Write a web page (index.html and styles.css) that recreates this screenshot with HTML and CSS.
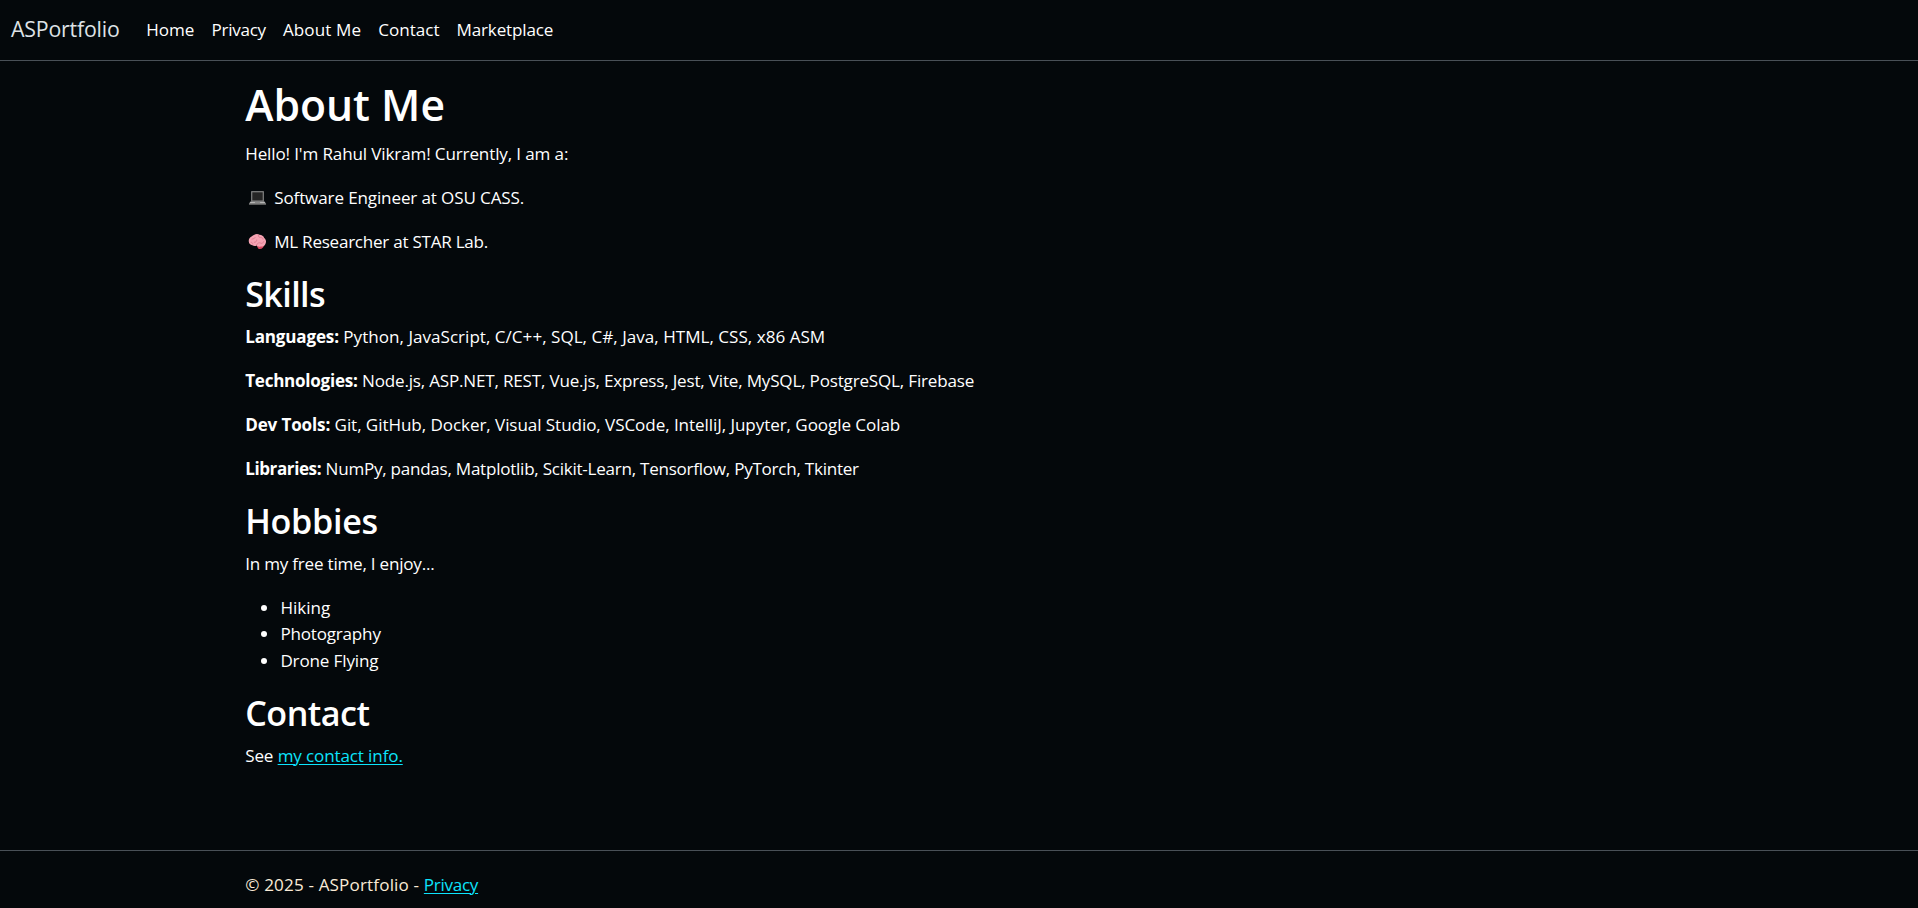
FILE: index.html
```html
<!DOCTYPE html>
<html lang="en">
<head>
<meta charset="utf-8">
<title>About Me - ASPortfolio</title>
<link rel="stylesheet" href="styles.css">
</head>
<body>
<header class="navbar">
  <a class="brand" href="#">ASPortfolio</a>
  <nav class="nav-links">
    <a class="nav-home" href="#">Home</a>
    <a class="nav-privacy" href="#">Privacy</a>
    <a class="nav-about" href="#">About Me</a>
    <a class="nav-contact" href="#">Contact</a>
    <a class="nav-market" href="#">Marketplace</a>
  </nav>
</header>
<main class="container">
  <h1>About Me</h1>
  <p class="intro">Hello! I'm Rahul Vikram! Currently, I am a:</p>
  <p class="role role-dev"><svg class="emoji" viewBox="0 0 24 24" aria-hidden="true"><path fill="#8d8d8d" d="M4 4h16v13H4z"/><path fill="#252525" d="M5.400 5.400h13.200v10.400H5.400z"/><path fill="#b5b5b5" d="M3.200 17h17.600l2 3H1.200z"/><path fill="#777" d="M9 18h6l.6 1.200H8.400zM1.200 19.600h21.600v1.400H1.200z"/></svg><span>Software Engineer at OSU CASS.</span></p>
  <p class="role role-ml"><svg class="emoji" viewBox="0 0 24 24" aria-hidden="true"><path fill="#d94b63" d="M11 16c2-1 8-1 9 1 0 2-2 4.500-5 4.500s-3-3-4-5.500z"/><path fill="#f5a3b3" d="M1 12c-.5-3 1.500-5.500 4-6.500C8 2.500 12 2 14.500 3.500c3 .2 5 1.500 6 4 2.500 2 2.800 5 1.500 7.500-1 2.500-3.500 3.500-6 3.200-2 .6-4 .3-5-1.200-2 1-4 .8-5.500-.3C3 16.500 1 14.500 1 12z"/><path fill="none" stroke="#dc7d91" stroke-width="1.200" stroke-linecap="round" d="M5 9c2-1 3 0 4-2M8 13c2 0 3-1 3-3m2-6c0 2 1 3 3 3s3 1 3 2m-8 7c1-2 3-3 5-2s3 0 4-2M4 13c1 0 2 1 2 2"/></svg><span>ML Researcher at STAR Lab.</span></p>

  <h2 class="h-skills">Skills</h2>
  <p class="langs"><strong>Languages:</strong> <span>Python, JavaScript, C/C++, SQL, C#, Java, HTML, CSS, x86 ASM</span></p>
  <p class="techs"><strong>Technologies:</strong> <span>Node.js, ASP.NET, REST, Vue.js, Express, Jest, Vite, MySQL, PostgreSQL, Firebase</span></p>
  <p class="tools"><strong>Dev Tools:</strong> <span>Git, GitHub, Docker, Visual Studio, VSCode, IntelliJ, Jupyter, Google Colab</span></p>
  <p class="libs"><strong>Libraries:</strong> <span>NumPy, pandas, Matplotlib, Scikit-Learn, Tensorflow, PyTorch, Tkinter</span></p>

  <h2 class="h-hobbies">Hobbies</h2>
  <p class="free-time">In my free time, I enjoy...</p>
  <ul>
    <li>Hiking</li>
    <li class="photo">Photography</li>
    <li class="drone">Drone Flying</li>
  </ul>

  <h2 class="h-contact">Contact</h2>
  <p class="see">See <a href="#">my contact info.</a></p>
</main>
<footer class="footer">
  <div class="footer-inner"><span>© 2025 - ASPortfolio - </span><a href="#">Privacy</a></div>
</footer>
</body>
</html>
```
FILE: styles.css
```css
* { box-sizing: border-box; }

body {
  margin: 0;
  height: 908px;
  display: flex;
  flex-direction: column;
  overflow: hidden;
  background: #04080b;
  color: #fff;
  font: 17.07px/26.4px "Segoe UI", "Open Sans", "Noto Sans", sans-serif;
}

a { color: #0ce4fc; text-decoration: underline; text-underline-offset: 2px; text-decoration-thickness: 1px; }

/* Top bar */
.navbar {
  height: 61px;
  padding: 0 11px;
  display: flex;
  align-items: center;
  border-bottom: 1px solid #495057;
}
.navbar a { color: #fff; text-decoration: none; }
.navbar .brand { color: #dee2e6; font-size: 21.34px; letter-spacing: -.193px; margin-right: 26.5px; padding-bottom: 1px; }
.nav-links { display: flex; gap: 17.1px; }
.nav-privacy { letter-spacing: -.28px; }
.nav-about { letter-spacing: .1px; }
.nav-market { letter-spacing: -.17px; }

/* Content */
.container { width: 1452px; margin: 18.1px auto 0; padding: 0 14.2px 0 12.2px; flex: 1; }

h1, h2 { margin: 0 0 8.8px; font-weight: 600; }
h1 { font-size: 42.68px; line-height: 52.8px; }
h2 { font-size: 34.14px; line-height: 42.24px; }
.h-skills { letter-spacing: -.6px; }
.h-hobbies { letter-spacing: -.3px; }
.h-contact { letter-spacing: -.5px; }

p { margin: 0 0 17.6px; }
strong { font-weight: 700; }
.intro { letter-spacing: -.136px; }
.role { display: flex; align-items: center; gap: 5px; }
.role-dev { letter-spacing: -.132px; }
.role-ml { letter-spacing: -.253px; }
.emoji { width: 19px; height: 19px; margin: 0 2px 0 3px; }
.langs strong { letter-spacing: -.169px; }
.langs span { letter-spacing: .015px; }
.techs strong { letter-spacing: -.26px; }
.techs span { letter-spacing: -.19px; }
.tools strong { letter-spacing: -.15px; }
.tools span { letter-spacing: -.07px; }
.libs strong { letter-spacing: -.413px; }
.libs span { letter-spacing: -.255px; }
.free-time { letter-spacing: -.219px; }

ul { margin: 0 0 17.6px; padding-left: 35.2px; }
.photo { letter-spacing: -.196px; }
.drone { letter-spacing: -.15px; }
.see { letter-spacing: -.13px; }

/* Footer */
.footer { height: 58px; border-top: 1px solid #495057; }
.footer-inner { width: 1452px; margin: 0 auto; padding: 21px 14.2px 0 12.2px; color: #faebd7; white-space: pre; }
.footer-inner span { letter-spacing: .16px; }
.footer-inner a { letter-spacing: -.287px; }
```
